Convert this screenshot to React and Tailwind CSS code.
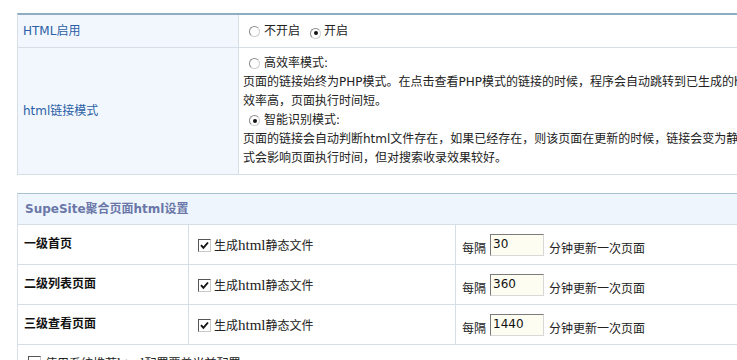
import React from "react";

const Radio = ({ checked }) => (
  <span className="inline-flex w-[11px] h-[11px] shrink-0 rounded-full border border-t-[#8a8a8a] border-l-[#8a8a8a] border-b-[#cfcfcf] border-r-[#cfcfcf] bg-white items-center justify-center">
    {checked && <span className="w-[4px] h-[4px] rounded-full bg-[#111]" />}
  </span>
);

const Check = ({ checked }) => (
  <span className="inline-flex w-[13px] h-[13px] shrink-0 border border-t-[#555] border-l-[#555] border-b-[#c9c9c9] border-r-[#c9c9c9] bg-white items-center justify-center">
    {checked && (
      <svg width="9" height="9" viewBox="0 0 9 9">
        <path d="M1 4.2 L3.4 6.8 L8 1.5" stroke="#111" strokeWidth="1.9" fill="none" />
      </svg>
    )}
  </span>
);

const Html = () => (
  <span className="font-['Liberation_Serif',serif] text-[15px] leading-[12px]">html</span>
);

const rows = [
  { label: "一级首页", value: "30" },
  { label: "二级列表页面", value: "360" },
  { label: "三级查看页面", value: "1440" },
];

export default function App() {
  return (
    <div className="w-[737px] h-[360px] overflow-hidden bg-white text-[12px] text-[#222] font-['DejaVu_Sans','Noto_Sans_CJK_SC',sans-serif]">
      <div className="pt-[13px] pl-[17px]">
        {/* Table 1 */}
        <div className="w-[900px] border-t-2 border-t-[#8fadc2] border-l border-l-[#d6dee7]">
          <div className="flex h-[33px] border-b border-b-[#d6dee7]">
            <div className="w-[221px] bg-[#f2f7fd] border-r border-r-[#d6dee7] pl-[5px] flex items-center text-[#2b5fa6]">
              HTML启用
            </div>
            <div className="flex-1 flex items-center pl-[10px]">
              <Radio />
              <span className="ml-[4px]">不开启</span>
              <span className="ml-[10px]"><Radio checked /></span>
              <span className="ml-[3px]">开启</span>
            </div>
          </div>
          <div className="flex h-[127px] border-b border-b-[#d6dee7]">
            <div className="w-[221px] bg-[#f2f7fd] border-r border-r-[#d6dee7] pl-[5px] flex items-center text-[#2b5fa6]">
              html链接模式
            </div>
            <div className="flex-1 pl-[4px] py-[6px] leading-[19px] whitespace-nowrap">
              <div className="flex items-center pl-[6px] h-[19px]">
                <Radio />
                <span className="ml-[4px]">高效率模式:</span>
              </div>
              <div>页面的链接始终为PHP模式。在点击查看PHP模式的链接的时候，程序会自动跳转到已生成的html页面上，这种模式</div>
              <div>效率高，页面执行时间短。</div>
              <div className="flex items-center pl-[6px] h-[19px]">
                <Radio checked />
                <span className="ml-[4px]">智能识别模式:</span>
              </div>
              <div>页面的链接会自动判断html文件存在，如果已经存在，则该页面在更新的时候，链接会变为静态的html地址。这种模</div>
              <div>式会影响页面执行时间，但对搜索收录效果较好。</div>
            </div>
          </div>
        </div>

        {/* Table 2 */}
        <div className="mt-[18px] w-[900px] border-t border-t-[#a9c3d6] border-l border-l-[#d6dee7]">
          <div className="h-[31px] bg-[#eef5fc] border-b border-b-[#d6dee7] pl-[7px] flex items-center font-bold text-[#6a77a8]">
            SupeSite聚合页面html设置
          </div>
          {rows.map((r) => (
            <div key={r.label} className="flex h-[40px] border-b border-b-[#d6dee7]">
              <div className="w-[171px] border-r border-r-[#d6dee7] pl-[6px] pb-[2px] flex items-center font-bold text-[#111]">
                {r.label}
              </div>
              <div className="w-[267px] border-r border-r-[#d6dee7] pl-[9px] pt-[2px] flex items-center">
                <Check checked />
                <span className="ml-[3px]">生成<Html />静态文件</span>
              </div>
              <div className="flex-1 pl-[6px] flex items-center">
                <span className="pt-[8px]">每隔</span>
                <input
                  readOnly
                  defaultValue={r.value}
                  className="ml-[4px] w-[54px] h-[22px] bg-[#fdfdf2] border border-t-[#7b7b7b] border-l-[#7b7b7b] border-b-[#d8d8d8] border-r-[#d8d8d8] pl-[2px] pb-[2px] text-[12px] text-[#111] outline-none"
                />
                <span className="ml-[5px] pt-[8px]">分钟更新一次页面</span>
              </div>
            </div>
          ))}
          <div className="h-[40px] pl-[10px] pt-[11px] flex items-start">
            <Check />
            <span className="ml-[4px] -mt-[1px]">使用系统推荐<Html />配置覆盖当前配置</span>
          </div>
        </div>
      </div>
    </div>
  );
}
